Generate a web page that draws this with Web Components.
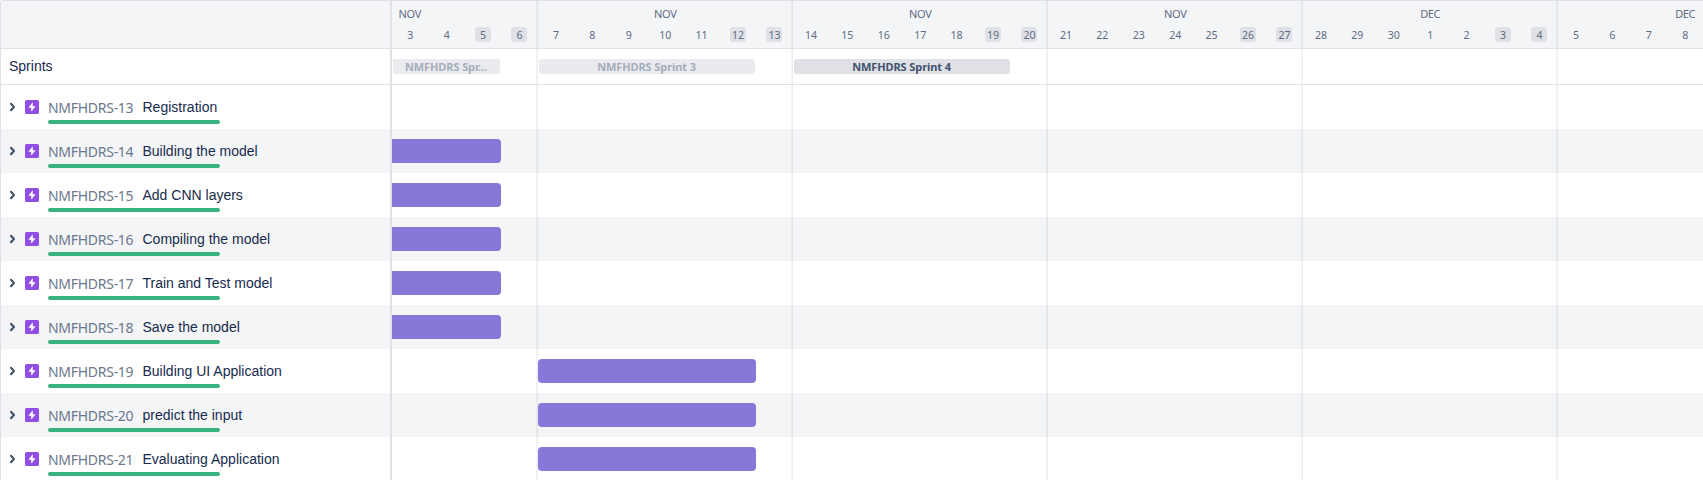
<!DOCTYPE html>
<html lang="en"><head><meta charset="utf-8"><title>Roadmap</title>
<style>
html,body{margin:0;height:100%;overflow:hidden;background:#fff}
body{font-family:"Liberation Sans",Arial,sans-serif;color:#172B4D}
</style></head><body>
<road-map></road-map>
<script>
const define = (name, css, html) => customElements.define(name, class extends HTMLElement {
  constructor() {
    super();
    this.attachShadow({mode: 'open'});
  }
  connectedCallback() {
    this.shadowRoot.innerHTML = `<style>*{box-sizing:border-box}${css}</style>${html(this)}`;
  }
});

define('day-cell', `
:host{display:flex;flex:0 0 36.43px;justify-content:center}
span{width:16px;height:15px;border-radius:3px;display:flex;justify-content:center;font-size:10.6px;line-height:16px;letter-spacing:-.1px}
:host([off]) span{background:#DFE1E6}`, () => `<span><slot></slot></span>`);

define('week-head', `
:host{display:flex;flex-direction:column;flex:0 0 255px;height:47px;font-family:"Noto Sans","Open Sans",sans-serif;color:#5E6C84}
:host([part-week]){flex-basis:145.1px}
.m{height:26px;padding-top:5px;text-align:center;font-size:11px;line-height:16px;letter-spacing:-.35px}
:host([part-week]) .m{text-align:left;padding-left:6.5px}
.d{display:flex}`, el => {
  const days = el.getAttribute('days').split(' ');
  return `<div class="m">${el.getAttribute('month')}</div><div class="d">${days.map(d =>
    `<day-cell ${(el.getAttribute('off') || '').split(' ').includes(d) ? 'off' : ''}>${d}</day-cell>`).join('')}</div>`;
});

define('sprint-bar', `
:host{display:block;flex:none;height:15px;background:#DFE1E6;border-radius:3px;color:#42526E;font:bold 11px/16px "Noto Sans","Open Sans",sans-serif;text-align:center;padding:0 11px 0 10px}
:host([closed]){background:#EAEBEF;color:#A5ADBA}
:host([cut]){border-radius:0 3px 3px 0}
span{display:block;overflow:hidden;white-space:nowrap;letter-spacing:-.1px}`, () => `<span><slot></slot></span>`);

define('epic-row', `
:host{display:flex;height:44px;padding-left:8px}
.chev{width:8px;height:10px;margin-top:17px}
.ico{width:14px;height:14px;margin:15px 0 0 8px}
.body{margin-left:9px;width:330px}
.line{display:flex;height:35px;white-space:nowrap}
.key{width:94.5px;color:#6B778C;font:14px/20px "Noto Sans","Open Sans",sans-serif;letter-spacing:-.28px;padding-top:13px}
.sum{font-size:14px;line-height:20px;padding-top:12px}
.bar{width:172px;height:4px;border-radius:2px;background:#36B37E}`, el => `
<svg class="chev" viewBox="0 0 8 10"><path d="M2 1.8 5 5 2 8.2" fill="none" stroke="#42526E" stroke-width="2.1" stroke-linecap="round" stroke-linejoin="round"/></svg>
<svg class="ico" viewBox="0 0 14 14"><rect width="14" height="14" rx="1.6" fill="#904EE2"/><path d="M7.5 2.9 4 7.5H6.5V11.1L10 6.5H7.5Z" fill="#fff" stroke="#fff" stroke-width=".6" stroke-linejoin="round"/></svg>
<div class="body"><div class="line"><div class="key">${el.getAttribute('key')}</div><div class="sum"><slot></slot></div></div><div class="bar"></div></div>`);

define('time-track', `
:host{display:flex;align-items:flex-start;height:44px;padding-top:10px}
i{display:block;height:24px;background:#8777D9;border-radius:4px}
i.a{width:109px;border-radius:0 4px 4px 0}
i.b{width:218px;margin-left:146px}`, el => el.hasAttribute('bar') ? `<i class="${el.getAttribute('bar')}"></i>` : '');

const epics = [['13','Registration',''],['14','Building the model','a'],['15','Add CNN layers','a'],['16','Compiling the model','a'],['17','Train and Test model','a'],['18','Save the model','a'],['19','Building UI Application','b'],['20','predict the input','b'],['21','Evaluating Application','b']];

define('road-map', `
:host{display:flex;height:480px;overflow:hidden;border:solid #DFE1E6;border-width:1px 0 0 1px;border-top-left-radius:3px}
.side{flex:0 0 391px;border-right:2px solid #DFE1E6}
.time{flex:1;min-width:0;overflow:hidden}
.head{height:48px;background-color:#F4F5F7;border-bottom:1px solid #DFE1E6;display:flex}
.sp{height:36px;border-bottom:1px solid #DFE1E6;display:flex;align-items:flex-start}
.side .sp{padding:9px 0 0 8px;font-size:14px;line-height:16px}
.time .sp{padding:10px 0 0 1px}
.alt{background-color:#F4F5F7}
.grid{background-image:linear-gradient(90deg,#091e420d 0 1px,#091e4214 1px 2px,transparent 2px);background-size:255px 100%;background-position:144px 0;background-repeat:repeat-x}`, () => `
<div class="side"><div class="head"></div><div class="sp">Sprints</div>
${epics.map((e, i) => `<epic-row class="${i % 2 ? 'alt' : ''}" key="NMFHDRS-${e[0]}">${e[1]}</epic-row>`).join('')}</div>
<div class="time"><div class="head grid">
<week-head part-week month="NOV" days="3 4 5 6" off="5 6"></week-head>
<week-head month="NOV" days="7 8 9 10 11 12 13" off="12 13"></week-head>
<week-head month="NOV" days="14 15 16 17 18 19 20" off="19 20"></week-head>
<week-head month="NOV" days="21 22 23 24 25 26 27" off="26 27"></week-head>
<week-head month="DEC" days="28 29 30 1 2 3 4" off="3 4"></week-head>
<week-head month="DEC" days="5 6 7 8"></week-head></div>
<div class="sp grid"><sprint-bar closed cut style="width:107px">NMFHDRS Spr...</sprint-bar><sprint-bar closed style="width:216px;margin-left:39px">NMFHDRS Sprint 3</sprint-bar><sprint-bar style="width:216px;margin-left:39px">NMFHDRS Sprint 4</sprint-bar></div>
${epics.map((e, i) => `<time-track class="grid ${i % 2 ? 'alt' : ''}" ${e[2] ? `bar="${e[2]}"` : ''}></time-track>`).join('')}</div>`);
</script></body></html>
